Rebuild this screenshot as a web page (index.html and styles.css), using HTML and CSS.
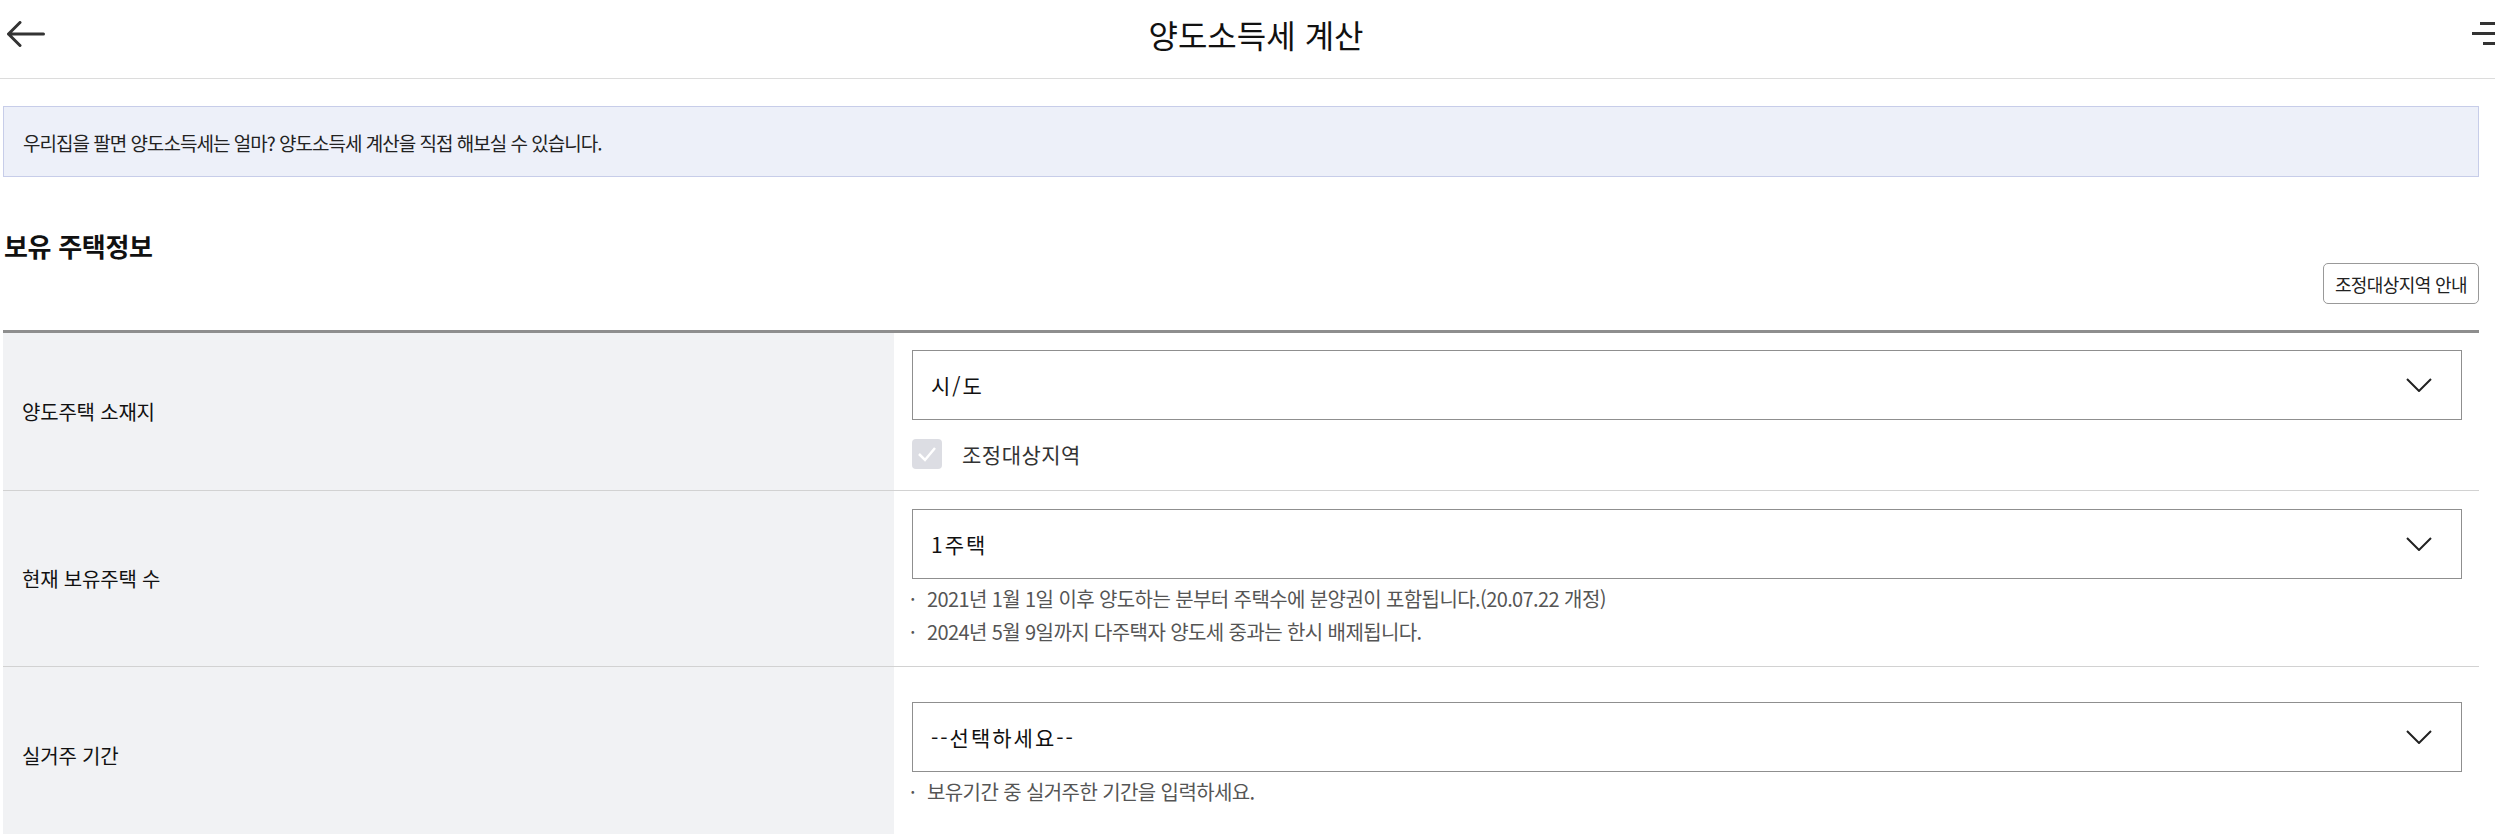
FILE: index.html
```html
<!DOCTYPE html>
<html lang="ko">

<head>
  <meta charset="UTF-8">
  <title>양도소득세 계산</title>
  <link rel="stylesheet" href="styles.css">
</head>

<body>

  <header class="header">
    <button class="header__back" type="button" aria-label="뒤로">
      <svg width="38" height="26" viewBox="0 0 38 26" fill="none" stroke="#333" stroke-width="3" stroke-linecap="round" stroke-linejoin="round">
        <path d="M13 1.5 L1.5 13 L13 24.5 M1.5 13 H36.5" />
      </svg>
    </button>
    <h1 class="header__title">양도소득세 계산</h1>
    <button class="header__menu" type="button" aria-label="메뉴">
      <svg width="40" height="24" viewBox="0 0 40 24" fill="none" stroke="#333" stroke-width="3">
        <path d="M8 1.5 H40 M0 11.5 H40 M11 21.5 H40" />
      </svg>
    </button>
  </header>

  <main class="container">
    <div class="notice">우리집을 팔면 양도소득세는 얼마? 양도소득세 계산을 직접 해보실 수 있습니다.</div>

    <h2 class="section-title">보유 주택정보</h2>
    <div class="section-tools">
      <button class="guide-btn" type="button">조정대상지역 안내</button>
    </div>

    <div class="form-table">
      <div class="form-row">
        <div class="form-row__label">양도주택 소재지</div>
        <div class="form-row__field">
          <div class="select">
            <select class="select__input">
              <option>시/도</option>
            </select>
            <svg class="select__arrow" width="26" height="14" viewBox="0 0 26 14" fill="none" stroke="#222" stroke-width="2">
              <path d="M1 1 L13 13 L25 1" />
            </svg>
          </div>
          <label class="check">
            <input class="check__input" type="checkbox" checked disabled>
            <span class="check__box">
              <svg width="30" height="30" viewBox="0 0 30 30" fill="none" stroke="#fff" stroke-width="2.5">
                <path d="M7 15 L13 21 L23 9" />
              </svg>
            </span>
            <span class="check__text">조정대상지역</span>
          </label>
        </div>
      </div>

      <div class="form-row form-row_size_m">
        <div class="form-row__label">현재 보유주택 수</div>
        <div class="form-row__field">
          <div class="select">
            <select class="select__input">
              <option>1주택</option>
            </select>
            <svg class="select__arrow" width="26" height="14" viewBox="0 0 26 14" fill="none" stroke="#222" stroke-width="2">
              <path d="M1 1 L13 13 L25 1" />
            </svg>
          </div>
          <ul class="notes">
            <li class="notes__item">2021년 1월 1일 이후 양도하는 분부터 주택수에 분양권이 포함됩니다.(20.07.22 개정)</li>
            <li class="notes__item">2024년 5월 9일까지 다주택자 양도세 중과는 한시 배제됩니다.</li>
          </ul>
        </div>
      </div>

      <div class="form-row form-row_size_l">
        <div class="form-row__label">실거주 기간</div>
        <div class="form-row__field">
          <div class="select">
            <select class="select__input">
              <option>--선택하세요--</option>
            </select>
            <svg class="select__arrow" width="26" height="14" viewBox="0 0 26 14" fill="none" stroke="#222" stroke-width="2">
              <path d="M1 1 L13 13 L25 1" />
            </svg>
          </div>
          <ul class="notes">
            <li class="notes__item">보유기간 중 실거주한 기간을 입력하세요.</li>
          </ul>
        </div>
      </div>
    </div>
  </main>

</body>

</html>
```

FILE: styles.css
```css
html,
body {
  margin: 0;
  font-family: "Noto Sans CJK KR", "Noto Sans", sans-serif;
  color: #222;
  overflow: hidden;
}

button,
select {
  font-family: inherit;
}

.header {
  height: 68px;
  padding-bottom: 10px;
  display: flex;
  align-items: center;
  border-bottom: 1px solid #dcdcdc;
}

.header__back {
  width: 52px;
  padding: 0 0 0 7px;
  display: flex;
  border: none;
  background: none;
}

.header__title {
  flex: 1;
  margin: 0;
  text-align: center;
  font-size: 32px;
  font-weight: 400;
  line-height: 1;
  color: #111;
}

.header__menu {
  width: 60px;
  margin-right: -25px;
  padding: 0 0 0 12px;
  display: flex;
  border: none;
  background: none;
}

.container {
  padding: 0 16px 0 3px;
}

.notice {
  margin-top: 27px;
  height: 71px;
  box-sizing: border-box;
  display: flex;
  align-items: center;
  padding: 2px 19px 0;
  border: 1px solid #c7cde9;
  background-color: #edf0f9;
  font-size: 19px;
  letter-spacing: -1px;
}

.section-title {
  margin: 52px 0 0 1px;
  font-size: 26px;
  font-weight: 700;
  line-height: 34px;
  letter-spacing: -0.3px;
  color: #111;
}

.section-tools {
  display: flex;
  justify-content: flex-end;
}

.guide-btn {
  height: 41px;
  padding: 0 11px;
  border: 1px solid #999;
  border-radius: 5px;
  background-color: #fff;
  font-size: 18px;
  letter-spacing: -0.6px;
  color: #222;
}

.form-table {
  margin-top: 26px;
  border-top: 3px solid #8e8e8e;
}

.form-row {
  display: flex;
  border-bottom: 1px solid #d2d2d2;
}

.form-row__label {
  flex: 0 0 891px;
  box-sizing: border-box;
  display: flex;
  align-items: center;
  padding-left: 19px;
  background-color: #f1f2f4;
  font-size: 20px;
  letter-spacing: -0.2px;
  color: #111;
}

.form-row__field {
  flex: 1;
  padding: 17px 17px 21px 18px;
}

.form-row_size_m .form-row__field {
  padding-top: 18px;
  padding-bottom: 18px;
}

.form-row_size_l .form-row__field {
  padding-top: 35px;
  padding-bottom: 35px;
}

.select {
  position: relative;
}

.select__input {
  width: 100%;
  height: 70px;
  padding: 0 70px 0 18px;
  appearance: none;
  border: 1px solid #8f8f8f;
  border-radius: 0;
  background-color: #fff;
  font-size: 21px;
  letter-spacing: 2px;
  color: #111;
}

.select__arrow {
  position: absolute;
  top: 28px;
  right: 30px;
  pointer-events: none;
}

.check {
  margin-top: 19px;
  display: flex;
  align-items: center;
}

.check__input {
  display: none;
}

.check__box {
  width: 30px;
  height: 30px;
  border-radius: 4px;
  background-color: #dcdde3;
  display: flex;
}

.check__text {
  margin-left: 20px;
  font-size: 21px;
  letter-spacing: 0.5px;
  color: #333;
}

.notes {
  margin: 3px 0 0;
  padding: 0;
  list-style: none;
}

.notes__item {
  position: relative;
  padding-left: 15px;
  font-size: 20px;
  line-height: 33px;
  letter-spacing: -0.6px;
  color: #555;
}

.notes__item::before {
  content: "·";
  position: absolute;
  left: -2px;
  top: 0;
}
```
